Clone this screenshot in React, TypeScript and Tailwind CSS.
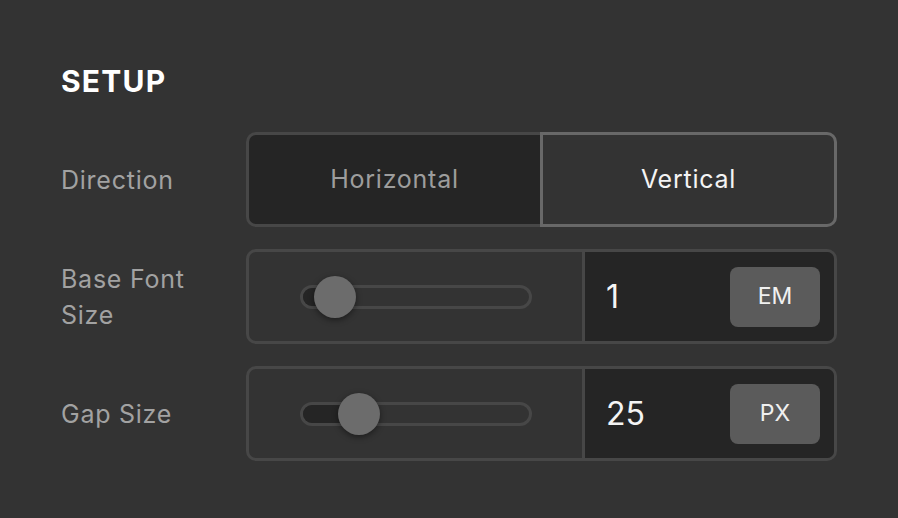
import React from "react";

function SliderRow({
  label,
  value,
  unit,
  fillClass,
  knobClass,
}: {
  label: React.ReactNode;
  value: string;
  unit: string;
  fillClass: string;
  knobClass: string;
}) {
  return (
    <div className="flex items-center">
      <div className="w-[150px] mr-[35px] text-[25px] leading-[36px] tracking-[0.03em] text-[#a2a2a2]">{label}</div>
      <div className="flex w-[591px] h-[95px] border-[3px] border-[#474747] rounded-[10px] overflow-hidden">
        <div className="w-[333px] flex items-center justify-center">
          <div className="relative w-[232px] h-[24px] rounded-full border-[3px] border-[#474747] bg-[#333333]">
            <div className={"absolute left-0 top-0 bottom-0 bg-[#252525] rounded-l-full " + fillClass} />
            <div
              className={
                "absolute top-1/2 -translate-y-1/2 w-[42px] h-[42px] rounded-full bg-[#6c6c6c] shadow-[0_2px_6px_rgba(0,0,0,0.45)] " +
                knobClass
              }
            />
          </div>
        </div>
        <div className="flex-1 bg-[#252525] border-l-[3px] border-[#474747] flex items-center justify-between pl-[21px] pr-[14px]">
          <span className="text-[32px] leading-none text-[#f4f4f4]">{value}</span>
          <div className="w-[90px] h-[60px] rounded-[8px] bg-[#5b5b5b] flex items-center justify-center text-[23px] text-[#f0f0f0]">
            {unit}
          </div>
        </div>
      </div>
    </div>
  );
}

export default function App() {
  return (
    <div
      className="w-[898px] h-[518px] bg-[#333333] px-[61px] pt-[63px]"
      style={{ fontFamily: "Inter, 'Noto Sans', sans-serif" }}
    >
      <h2 className="text-[30px] leading-[36px] font-bold tracking-[0.04em] text-white">SETUP</h2>
      <div className="mt-[33px] flex flex-col gap-[22px]">
        <div className="flex items-center">
          <div className="w-[150px] mr-[35px] text-[25px] leading-[36px] tracking-[0.03em] text-[#a2a2a2]">Direction</div>
          <div className="flex w-[591px] h-[95px]">
            <div className="w-[294px] bg-[#252525] border-[3px] border-r-0 border-[#474747] rounded-l-[10px] flex items-center justify-center text-[25px] tracking-[0.03em] text-[#9d9d9d]">
              Horizontal
            </div>
            <div className="flex-1 bg-[#333333] border-[3px] border-[#686868] rounded-r-[10px] flex items-center justify-center text-[25px] tracking-[0.03em] text-[#f4f4f4]">
              Vertical
            </div>
          </div>
        </div>
        <SliderRow
          label={
            <>
              Base Font
              <br />
              Size
            </>
          }
          value="1"
          unit="EM"
          fillClass="w-[32px]"
          knobClass="left-[11px]"
        />
        <SliderRow label="Gap Size" value="25" unit="PX" fillClass="w-[56px]" knobClass="left-[35px]" />
      </div>
    </div>
  );
}
